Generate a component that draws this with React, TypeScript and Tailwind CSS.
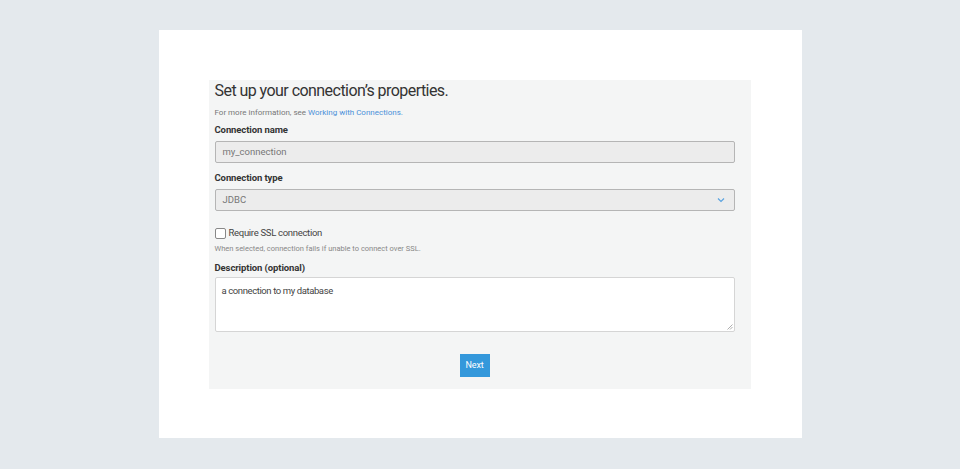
export default function App() {
  return (
    <div
      className="h-[469px] w-[960px] bg-[#e4e9ed] pt-[30px]"
      style={{ fontFamily: 'Roboto, "Liberation Sans", Arial, sans-serif' }}
    >
      <div className="mx-auto h-[408px] w-[643px] bg-white p-[50px]">
        <div className="h-[309px] w-[542px] bg-[#f4f5f5] pl-[6px] pr-[16px]">
          <h1 className="pt-[1px] text-[16px] leading-[20px] tracking-[-0.55px] text-[#333]">
            Set up your connection’s properties.
          </h1>
          <p className="mt-[7px] text-[8px] leading-[10px] text-[#777]">
            For more information, see{' '}
            <a className="text-[#4a90d9]">Working with Connections.</a>
          </p>
          <label className="mt-[6px] block text-[9.5px] font-bold leading-[12px] tracking-[-0.1px] text-[#333]">
            Connection name
          </label>
          <div className="mt-[5px] flex h-[22px] items-center rounded-[2px] border border-[#b5b5b5] bg-[#ececec] px-[7px] text-[9.5px] text-[#777]">
            my_connection
          </div>
          <label className="mt-[9px] block text-[9.5px] font-bold leading-[12px] tracking-[-0.1px] text-[#333]">
            Connection type
          </label>
          <div className="mt-[5px] flex h-[22px] items-center justify-between rounded-[2px] border border-[#b5b5b5] bg-[#ececec] px-[7px] text-[9.5px] text-[#777]">
            <span>JDBC</span>
            <svg width="8" height="6" viewBox="0 0 8 6" className="mr-[2px]">
              <path d="M1 1.5 L4 4.5 L7 1.5" fill="none" stroke="#5aa3e0" strokeWidth="1.2" />
            </svg>
          </div>
          <div className="mt-[16px] flex h-[12px] items-center gap-[3px]">
            <span className="h-[11px] w-[11px] rounded-[2px] border border-[#888] bg-white" />
            <span className="text-[9.5px] leading-[12px] tracking-[-0.3px] text-[#444]">Require SSL connection</span>
          </div>
          <p className="mt-[5px] text-[7.5px] leading-[10px] text-[#888]">
            When selected, connection fails if unable to connect over SSL.
          </p>
          <label className="mt-[8px] block text-[9.5px] font-bold leading-[12px] tracking-[-0.1px] text-[#333]">
            Description (optional)
          </label>
          <div className="relative mt-[3px] h-[55px] rounded-[2px] border border-[#d5d5d5] bg-white px-[6px] pt-[7px] text-[9.5px] leading-[12px] tracking-[-0.4px] text-[#444]">
            a connection to my database
            <svg width="6" height="6" viewBox="0 0 6 6" className="absolute bottom-[1px] right-[1px]">
              <path d="M5.5 0.5 L0.5 5.5 M5.5 3 L3 5.5" stroke="#999" strokeWidth="0.8" />
            </svg>
          </div>
          <div className="mt-[22px] flex justify-center">
            <button className="h-[23px] w-[30px] bg-[#3498db] text-[9px] tracking-[-0.2px] text-white">Next</button>
          </div>
        </div>
      </div>
    </div>
  );
}
